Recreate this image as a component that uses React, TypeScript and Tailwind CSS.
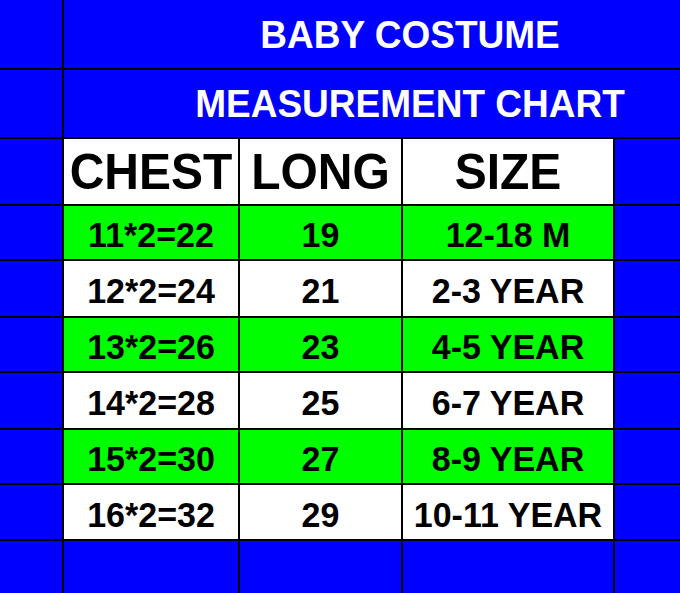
const ROWS = [
  { chest: '11*2=22', long: '19', size: '12-18 M', green: true },
  { chest: '12*2=24', long: '21', size: '2-3 YEAR', green: false },
  { chest: '13*2=26', long: '23', size: '4-5 YEAR', green: true },
  { chest: '14*2=28', long: '25', size: '6-7 YEAR', green: false },
  { chest: '15*2=30', long: '27', size: '8-9 YEAR', green: true },
  { chest: '16*2=32', long: '29', size: '10-11 YEAR', green: false },
]

const ROW_HEIGHTS = ['h-[53px]', 'h-[55px]', 'h-[53px]', 'h-[55px]', 'h-[53px]', 'h-[54px]']

function Cell({ className = '', children }: { className?: string; children?: React.ReactNode }) {
  return <div className={`flex items-center justify-center ${className}`}>{children}</div>
}

export default function App() {
  return (
    <div
      className="w-[680px] h-[593px] bg-black grid grid-cols-[62px_174px_161px_210px_65px] gap-[2px] overflow-hidden"
      style={{ fontFamily: '"Liberation Sans", Arial, sans-serif' }}
    >
      {/* title rows */}
      <Cell className="h-[68px] bg-[#0000fe]" />
      <Cell className="col-span-4 h-[68px] bg-[#0000fe] pl-[76px] text-[37px] font-bold text-white leading-none">
        <span className="scale-y-[1.04]">BABY COSTUME</span>
      </Cell>
      <Cell className="h-[67px] bg-[#0000fe]" />
      <Cell className="col-span-4 h-[67px] bg-[#0000fe] pl-[76px] text-[37px] font-bold text-white leading-none">
        <span className="scale-y-[1.04]">MEASUREMENT CHART</span>
      </Cell>

      {/* header */}
      <Cell className="h-[65px] bg-[#0000fe]" />
      <Cell className="bg-white text-[48px] font-bold text-black leading-none">
        <span className="scale-y-[1.05]">CHEST</span>
      </Cell>
      <Cell className="bg-white text-[48px] font-bold text-black leading-none">
        <span className="scale-y-[1.05]">LONG</span>
      </Cell>
      <Cell className="bg-white text-[48px] font-bold text-black leading-none">
        <span className="scale-y-[1.05]">SIZE</span>
      </Cell>
      <Cell className="bg-[#0000fe]" />

      {ROWS.map((r, i) => {
        const bg = r.green ? 'bg-[#00fe00]' : 'bg-white'
        const text = 'pt-[5px] text-[34px] font-bold text-black leading-none'
        return (
          <div key={r.chest} className="contents">
            <Cell className={`${ROW_HEIGHTS[i]} bg-[#0000fe]`} />
            <Cell className={`${bg} ${text}`}>
              <span className="scale-y-[1.04]">{r.chest}</span>
            </Cell>
            <Cell className={`${bg} ${text}`}>
              <span className="scale-y-[1.04]">{r.long}</span>
            </Cell>
            <Cell className={`${bg} ${text}`}>
              <span className="scale-y-[1.04]">{r.size}</span>
            </Cell>
            <Cell className="bg-[#0000fe]" />
          </div>
        )
      })}

      {/* empty bottom row */}
      <Cell className="h-[52px] bg-[#0000fe]" />
      <Cell className="bg-[#0000fe]" />
      <Cell className="bg-[#0000fe]" />
      <Cell className="bg-[#0000fe]" />
      <Cell className="bg-[#0000fe]" />
    </div>
  )
}
